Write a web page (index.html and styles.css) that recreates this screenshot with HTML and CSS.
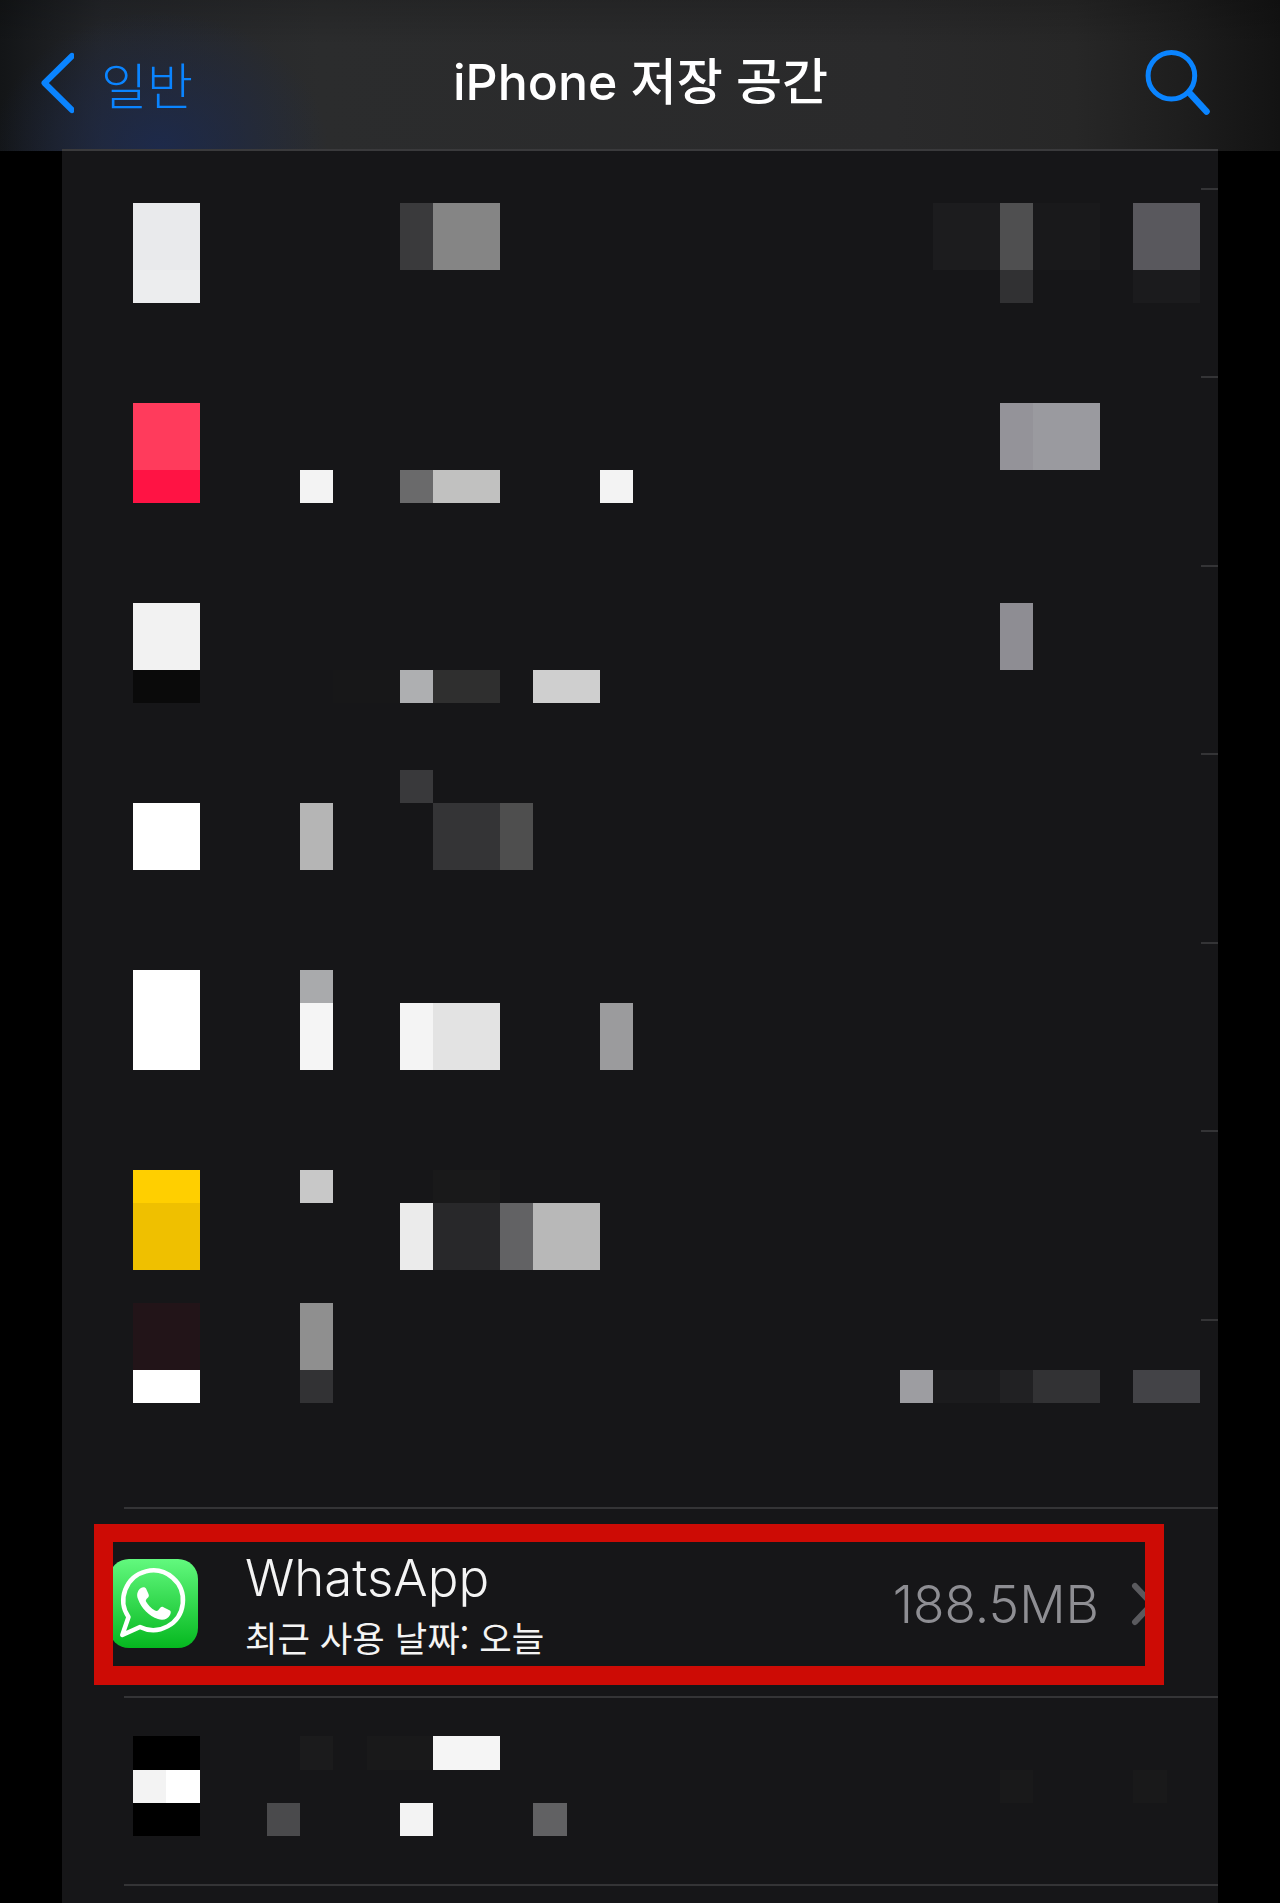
FILE: index.html
```html
<!DOCTYPE html>
<html lang="ko">
<head>
  <meta charset="UTF-8">
  <meta name="viewport" content="width=device-width, initial-scale=1.0">
  <title>iPhone 저장 공간</title>
  <link rel="stylesheet" href="styles.css">
</head>
<body>
  <header class="navbar">
    <div class="nav-glow"></div>
    <a class="nav-back">
      <svg class="back-icon" width="34" height="62" viewBox="0 0 34 62">
        <path d="M32 4 L4.500 31 L32 58" fill="none" stroke="#0a84ff" stroke-width="6" stroke-linecap="round" stroke-linejoin="round"/>
      </svg>
      <span>일반</span>
    </a>
    <h1 class="nav-title">iPhone 저장 공간</h1>
    <svg class="search-icon" width="66" height="66" viewBox="0 0 66 66">
      <circle cx="26.400" cy="25.800" r="23.300" fill="none" stroke="#0a84ff" stroke-width="5"/>
      <path d="M45 43.500 L61.500 61.500" fill="none" stroke="#0a84ff" stroke-width="6.500" stroke-linecap="round"/>
    </svg>
  </header>

  <main class="sheet">
    <!-- pixelated part of the list, blocks sit on the mosaic grid of the screenshot -->
    <div class="hidden-rows">
      <svg class="mosaic" width="1139" height="1356" viewBox="62 151 1139 1356" shape-rendering="crispEdges">
        <!-- row 1 -->
        <rect x="133" y="203" width="67" height="67" fill="#e9eaec"/>
        <rect x="133" y="270" width="67" height="33" fill="#ecedee"/>
        <rect x="400" y="203" width="33" height="67" fill="#3a3a3c"/>
        <rect x="433" y="203" width="67" height="67" fill="#858585"/>
        <rect x="933" y="203" width="67" height="67" fill="#1c1c1e"/>
        <rect x="1000" y="203" width="33" height="67" fill="#4f4f50"/>
        <rect x="1033" y="203" width="67" height="67" fill="#19191b"/>
        <rect x="1133" y="203" width="67" height="67" fill="#59585d"/>
        <rect x="1000" y="270" width="33" height="33" fill="#313133"/>
        <rect x="1133" y="270" width="67" height="33" fill="#1b1b1d"/>
        <!-- row 2 -->
        <rect x="133" y="403" width="67" height="67" fill="#ff3b5c"/>
        <rect x="133" y="470" width="67" height="33" fill="#ff1344"/>
        <rect x="300" y="470" width="33" height="33" fill="#f3f3f3"/>
        <rect x="400" y="470" width="33" height="33" fill="#6a6a6b"/>
        <rect x="433" y="470" width="67" height="33" fill="#c1c1c0"/>
        <rect x="600" y="470" width="33" height="33" fill="#f3f3f3"/>
        <rect x="1000" y="403" width="33" height="67" fill="#949399"/>
        <rect x="1033" y="403" width="67" height="67" fill="#9a9a9f"/>
        <!-- row 3 -->
        <rect x="133" y="603" width="67" height="67" fill="#f2f2f2"/>
        <rect x="133" y="670" width="67" height="33" fill="#0a0a0a"/>
        <rect x="333" y="670" width="67" height="33" fill="#171718"/>
        <rect x="400" y="670" width="33" height="33" fill="#aeafb1"/>
        <rect x="433" y="670" width="67" height="33" fill="#2f2f2f"/>
        <rect x="533" y="670" width="67" height="33" fill="#cfcfcf"/>
        <rect x="1000" y="603" width="33" height="67" fill="#8e8d93"/>
        <!-- row 4 -->
        <rect x="400" y="770" width="33" height="33" fill="#39393b"/>
        <rect x="133" y="803" width="67" height="67" fill="#ffffff"/>
        <rect x="300" y="803" width="33" height="67" fill="#b5b5b5"/>
        <rect x="433" y="803" width="67" height="67" fill="#343436"/>
        <rect x="500" y="803" width="33" height="67" fill="#4e4e4e"/>
        <!-- row 5 -->
        <rect x="133" y="970" width="67" height="100" fill="#ffffff"/>
        <rect x="300" y="970" width="33" height="33" fill="#a9aaac"/>
        <rect x="300" y="1003" width="33" height="67" fill="#f5f5f5"/>
        <rect x="400" y="1003" width="33" height="67" fill="#f4f4f4"/>
        <rect x="433" y="1003" width="67" height="67" fill="#e3e3e3"/>
        <rect x="600" y="1003" width="33" height="67" fill="#9b9b9d"/>
        <!-- row 6 -->
        <rect x="133" y="1170" width="67" height="33" fill="#ffcf00"/>
        <rect x="133" y="1203" width="67" height="67" fill="#efc000"/>
        <rect x="300" y="1170" width="33" height="33" fill="#c8c8c8"/>
        <rect x="433" y="1170" width="67" height="33" fill="#19191a"/>
        <rect x="400" y="1203" width="33" height="67" fill="#ebebeb"/>
        <rect x="433" y="1203" width="67" height="67" fill="#28282a"/>
        <rect x="500" y="1203" width="33" height="67" fill="#626264"/>
        <rect x="533" y="1203" width="67" height="67" fill="#b8b8b8"/>
        <!-- row 7 -->
        <rect x="133" y="1303" width="67" height="67" fill="#221418"/>
        <rect x="133" y="1370" width="67" height="33" fill="#ffffff"/>
        <rect x="300" y="1303" width="33" height="67" fill="#8f8f8f"/>
        <rect x="300" y="1370" width="33" height="33" fill="#323234"/>
        <rect x="900" y="1370" width="33" height="33" fill="#9d9da1"/>
        <rect x="933" y="1370" width="67" height="33" fill="#1b1b1d"/>
        <rect x="1000" y="1370" width="33" height="33" fill="#212123"/>
        <rect x="1033" y="1370" width="67" height="33" fill="#323234"/>
        <rect x="1133" y="1370" width="67" height="33" fill="#434347"/>
      </svg>
      <div class="ticks">
        <div class="tick"></div>
        <div class="tick"></div>
        <div class="tick"></div>
        <div class="tick"></div>
        <div class="tick"></div>
        <div class="tick"></div>
        <div class="tick"></div>
      </div>
    </div>

    <section class="app-row">
      <svg class="app-icon" width="89" height="89" viewBox="0 0 89 89">
        <defs>
          <linearGradient id="waGreen" x1="0" y1="0" x2="0" y2="1">
            <stop offset="0" stop-color="#62f97e"/>
            <stop offset="1" stop-color="#05b81f"/>
          </linearGradient>
        </defs>
        <rect width="89" height="89" rx="20" fill="url(#waGreen)"/>
        <path d="M13.300 76 L19.500 58 A29.800 29.800 0 1 1 31 68 Z" fill="none" stroke="#fff" stroke-width="4.500" stroke-linejoin="round"/>
        <path transform="translate(2 4)" d="M30 25 C27 27 25 31 27 36 C30 45 38 53 47 56 C52 58 57 56 59 52 C60 50 60 48 59 47.500 L52 44 C51 43.500 50 44 49 45 L47 47.500 C46 48 45 48 44 47.500 C40 45.500 37 42 35 38.500 C34.500 37.500 35 37 35.500 36 L37.500 34 C38 33 38 32 37.500 31 L35 25.500 C34 24 31.500 24 30 25 Z" fill="#fff"/>
      </svg>
      <div class="app-text">
        <div class="app-name">WhatsApp</div>
        <div class="app-used">최근 사용 날짜: 오늘</div>
      </div>
      <div class="app-size">188.5MB</div>
      <svg class="row-chevron" width="26" height="44" viewBox="0 0 26 44">
        <path d="M4 4 L21 22 L4 40" fill="none" stroke="#5a5a5e" stroke-width="6" stroke-linecap="round" stroke-linejoin="round"/>
      </svg>
    </section>

    <section class="last-row">
      <svg class="mosaic" width="1156" height="190" viewBox="62 1696 1156 190" shape-rendering="crispEdges">
        <rect x="133" y="1736" width="67" height="34" fill="#000000"/>
        <rect x="133" y="1770" width="33" height="33" fill="#f3f3f3"/>
        <rect x="166" y="1770" width="34" height="33" fill="#ffffff"/>
        <rect x="133" y="1803" width="67" height="33" fill="#000000"/>
        <rect x="300" y="1736" width="33" height="34" fill="#1b1b1c"/>
        <rect x="367" y="1736" width="66" height="34" fill="#19191a"/>
        <rect x="433" y="1736" width="67" height="34" fill="#f5f5f5"/>
        <rect x="267" y="1803" width="33" height="33" fill="#4a4a4c"/>
        <rect x="400" y="1803" width="33" height="33" fill="#f3f3f3"/>
        <rect x="533" y="1803" width="34" height="33" fill="#616163"/>
        <rect x="1000" y="1770" width="33" height="33" fill="#19191a"/>
        <rect x="1133" y="1770" width="34" height="33" fill="#19191a"/>
      </svg>
    </section>
  </main>

  <!-- annotation drawn on top of the screenshot -->
  <div class="red-box"></div>
</body>
</html>
```

FILE: styles.css
```css
html, body {
  margin: 0;
  padding: 0;
  background: #000;
}

body {
  position: relative;
  width: 1280px;
  height: 1903px;
  overflow: hidden;
  font-family: Inter, "Noto Sans CJK KR", sans-serif;
}

.navbar {
  position: relative;
  height: 151px;
  background:
    linear-gradient(180deg, rgba(0, 0, 0, 0.16) 0%, rgba(0, 0, 0, 0) 30%),
    linear-gradient(90deg, #131517 0%, #24262a 8%, #2b2c2d 25%, #2a2a2b 70%, #272727 84%, #1e1e1e 92%, #131313 100%);
  overflow: hidden;
}

.nav-glow {
  position: absolute;
  left: -10px;
  top: 10px;
  width: 340px;
  height: 280px;
  background: radial-gradient(ellipse at 50% 50%, rgba(28, 42, 78, 0.9) 0%, rgba(28, 42, 78, 0) 70%);
}

.nav-back {
  position: absolute;
  left: 40px;
  top: 52px;
  display: flex;
  align-items: center;
  gap: 27px;
  color: #0a84ff;
  font-size: 50px;
  line-height: 60px;
  font-family: "Noto Sans CJK KR", sans-serif;
  font-weight: 300;
}

.nav-title {
  position: absolute;
  left: 453px;
  top: 50px;
  margin: 0;
  color: #fff;
  font-size: 50px;
  line-height: 64px;
  font-weight: 500;
  white-space: nowrap;
}

.search-icon {
  position: absolute;
  left: 1145px;
  top: 50px;
}

.sheet {
  margin: -2px 62px 0;
  height: 1752px;
  background: #161618;
  border-top: 2px solid #3a3a3c;
  position: relative;
}

.hidden-rows {
  display: flex;
  height: 1356px;
}

.mosaic {
  display: block;
  flex: none;
}

.ticks {
  flex: 1;
  display: flex;
  flex-direction: column;
  gap: 186.500px;
  padding-top: 36.500px;
}

.tick {
  height: 2px;
  background: #343436;
}

.app-row {
  display: flex;
  align-items: center;
  height: 185px;
  padding-top: 2px;
  margin-left: 62px;
  border-top: 2px solid #343436;
}

.app-icon {
  flex: none;
  margin-left: -15px;
}

.app-text {
  margin-left: 47px;
  flex: 1;
  color: #f4f4f4;
}

.app-name {
  font-size: 51px;
  line-height: 58px;
  font-weight: 300;
}

.app-used {
  margin-top: 8px;
  font-family: "Noto Sans CJK KR", sans-serif;
  font-size: 35.300px;
  line-height: 44px;
  font-weight: 400;
}

.app-size {
  color: #8e8e93;
  font-size: 51.500px;
  font-weight: 300;
  margin-right: 32px;
}

.row-chevron {
  flex: none;
  margin-right: 61px;
}

.last-row {
  height: 190px;
  position: relative;
}

.last-row::before {
  content: "";
  position: absolute;
  left: 62px;
  right: 0;
  top: 0;
  height: 2px;
  background: #343436;
}

.last-row::after {
  content: "";
  position: absolute;
  left: 62px;
  right: 0;
  bottom: 0;
  height: 2px;
  background: #343436;
}

.red-box {
  position: absolute;
  left: 94px;
  top: 1524px;
  width: 1070px;
  height: 161px;
  box-sizing: border-box;
  border: 19px solid #cd0b05;
  border-top-width: 18px;
}
```
